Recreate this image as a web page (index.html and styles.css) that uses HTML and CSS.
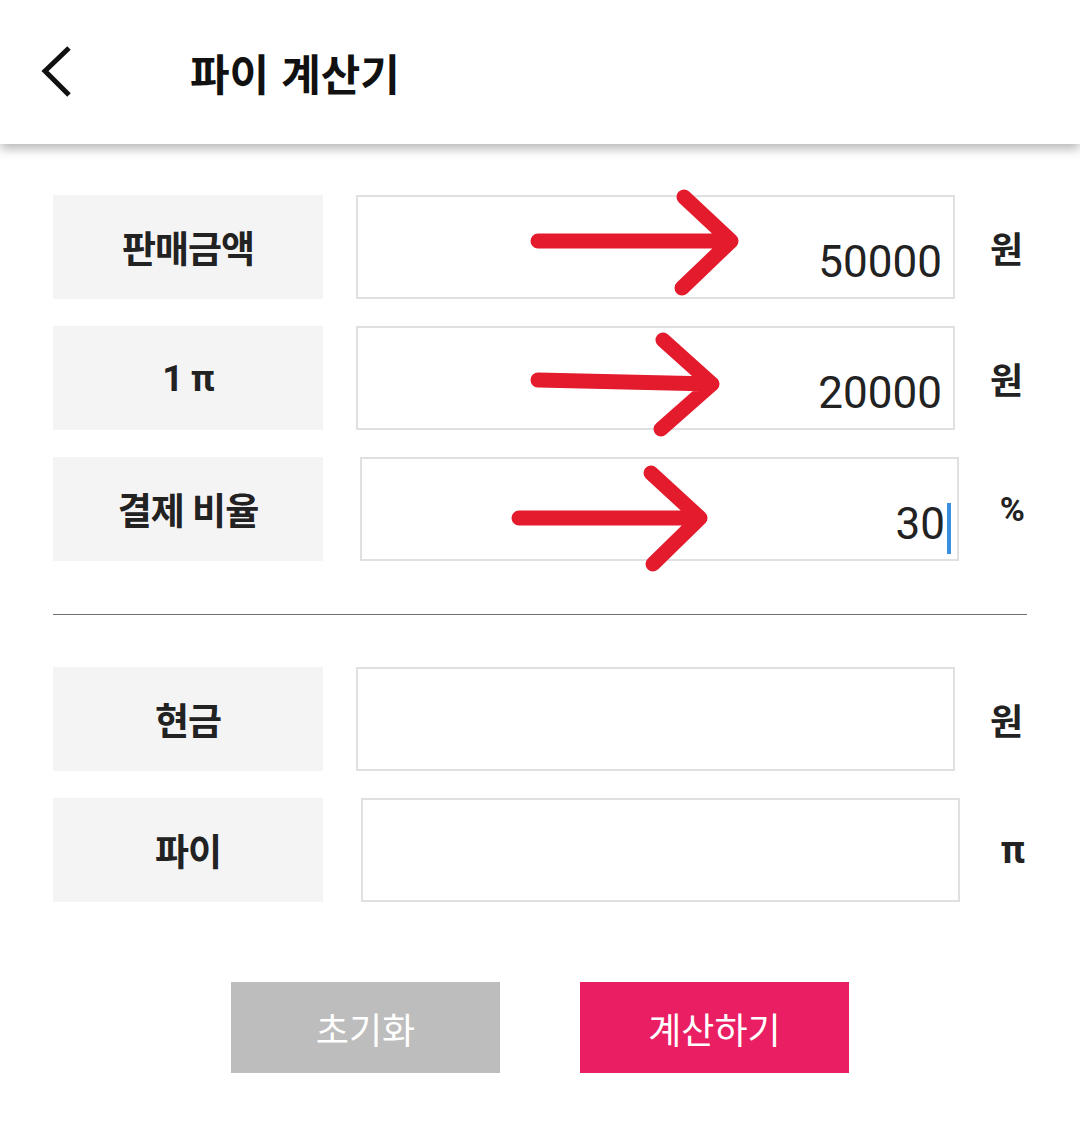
FILE: index.html
```html
<!DOCTYPE html>
<html lang="ko">
<head>
<meta charset="utf-8">
<title>파이 계산기</title>
<link rel="stylesheet" href="styles.css">
</head>
<body>
<div class="page">
  <header class="appbar">
    <span class="back" aria-label="뒤로">
      <svg width="36" height="56" viewBox="0 0 36 56"><polyline points="29,4 5,27 29,51" fill="none" stroke="#111" stroke-width="5"/></svg>
    </span>
    <h1 class="title">파이 계산기</h1>
  </header>

  <main class="form">
    <div class="row">
      <div class="label">판매금액</div>
      <div class="field"><span class="value">50000</span></div>
      <div class="unit">원</div>
    </div>
    <div class="row">
      <div class="label">1 π</div>
      <div class="field"><span class="value">20000</span></div>
      <div class="unit">원</div>
    </div>
    <div class="row row-last">
      <div class="label">결제 비율</div>
      <div class="field field-shift field-focus"><span class="value">30</span><span class="caret"></span></div>
      <div class="unit unit-sym">%</div>
    </div>

    <hr class="divider">

    <div class="row">
      <div class="label">현금</div>
      <div class="field"></div>
      <div class="unit">원</div>
    </div>
    <div class="row row-last">
      <div class="label">파이</div>
      <div class="field field-shift2"></div>
      <div class="unit unit-sym unit-pi">π</div>
    </div>

    <div class="actions">
      <button class="btn btn-reset">초기화</button>
      <button class="btn btn-calc">계산하기</button>
    </div>
  </main>

  <svg class="annotations" width="1080" height="1133" viewBox="0 0 1080 1133">
    <g fill="none" stroke="#e31b2d" stroke-width="15" stroke-linecap="round" stroke-linejoin="round">
      <path d="M538 241 L731 241 M684 197 L731 241 L682 288"/>
      <path d="M538 380 L712 384 M663 340 L712 384 L661 429"/>
      <path d="M519 518 L700 518 M651 473 L700 518 L653 564"/>
    </g>
  </svg>
</div>
</body>
</html>
```

FILE: styles.css
```css
* { box-sizing: border-box; }

html, body {
  margin: 0;
  padding: 0;
  background: #fff;
}

body {
  font-family: Roboto, "Noto Sans CJK KR", sans-serif;
  color: #1c1c1c;
}

.page {
  position: relative;
  width: 1080px;
  min-height: 1133px;
  overflow: hidden;
}

.appbar {
  height: 144px;
  display: flex;
  align-items: center;
  padding-left: 40px;
  background: #fff;
  box-shadow: 0 5px 10px rgba(0, 0, 0, 0.28);
  position: relative;
  z-index: 1;
}

.back {
  display: flex;
  width: 36px;
  height: 56px;
}

.title {
  margin: 0 0 0 114px;
  font-family: "Noto Sans CJK KR", sans-serif;
  font-size: 43px;
  font-weight: 700;
  letter-spacing: 0;
  color: #111;
}

.form {
  padding: 51px 53px 0;
}

.row {
  display: flex;
  align-items: center;
  height: 104px;
  margin-bottom: 27px;
}

.row-last { margin-bottom: 0; }

.label {
  width: 270px;
  height: 104px;
  flex: none;
  background: #f4f4f4;
  display: flex;
  align-items: center;
  justify-content: center;
  font-size: 37px;
  font-weight: 700;
  letter-spacing: -1px;
  color: #222;
}

.field {
  width: 599px;
  height: 104px;
  flex: none;
  margin-left: 33px;
  border: 2px solid #e0e0e0;
  background: #fff;
  display: flex;
  align-items: flex-end;
  justify-content: flex-end;
  padding: 0 11px 13px 0;
}

.field-shift { margin-left: 37px; }
.field-shift2 { margin-left: 38px; }

.field-focus { padding-right: 6px; }

.value {
  font-family: Roboto, sans-serif;
  font-size: 44px;
  line-height: 44px;
  color: #222;
}

.caret {
  width: 4px;
  height: 51px;
  margin: 0 0 -8px 2px;
  background: #3b8fe0;
}

.unit {
  flex: 1;
  text-align: right;
  padding-right: 4px;
  font-size: 36px;
  font-weight: 700;
  color: #222;
}

.unit-sym {
  padding-right: 2px;
  font-size: 34px;
}

.unit-pi {
  font-size: 38px;
}

.divider {
  margin: 53px 0 52px;
  border: 0;
  border-top: 1px solid #707070;
  height: 0;
}

.actions {
  display: flex;
  justify-content: center;
  gap: 80px;
  margin-top: 80px;
}

.btn {
  width: 269px;
  height: 91px;
  border: 0;
  border-radius: 0;
  font-family: "Noto Sans CJK KR", sans-serif;
  font-size: 36px;
  font-weight: 400;
  color: #fff;
  padding: 0;
}

.btn-reset { background: #bdbdbd; }
.btn-calc { background: #e91e63; }

.annotations {
  position: absolute;
  left: 0;
  top: 0;
  pointer-events: none;
  z-index: 2;
}
```
